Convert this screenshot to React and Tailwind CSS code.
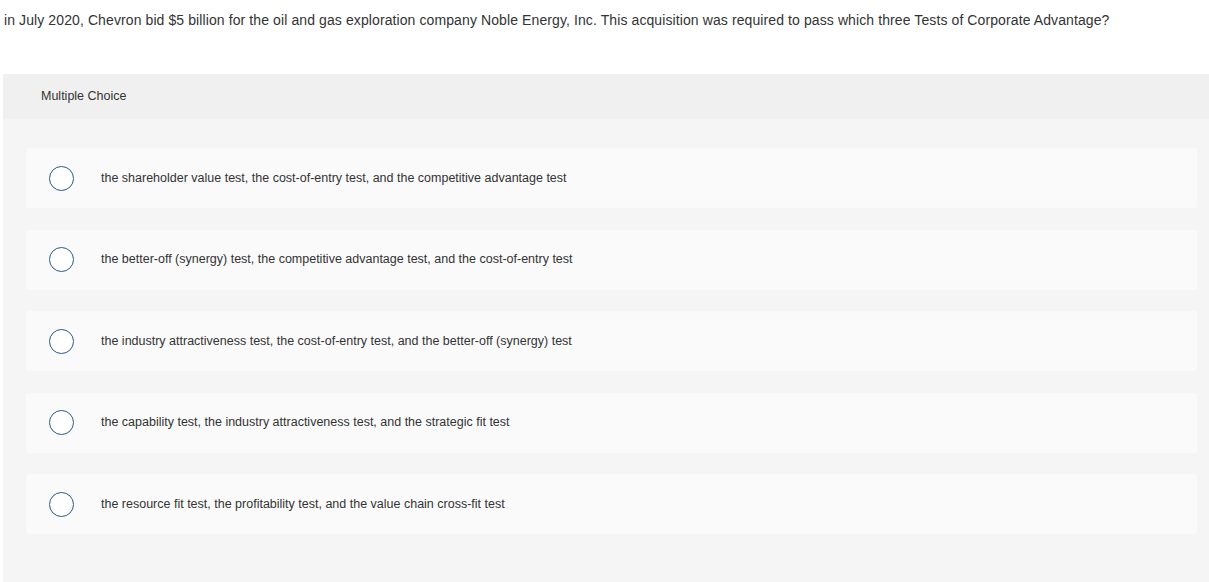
import React from "react";

const options = [
  "the shareholder value test, the cost-of-entry test, and the competitive advantage test",
  "the better-off (synergy) test, the competitive advantage test, and the cost-of-entry test",
  "the industry attractiveness test, the cost-of-entry test, and the better-off (synergy) test",
  "the capability test, the industry attractiveness test, and the strategic fit test",
  "the resource fit test, the profitability test, and the value chain cross-fit test",
];

const App = () => {
  return (
    <div className="min-h-screen bg-white text-[#333] font-['Liberation_Sans',Arial,sans-serif]">
      {/* Question */}
      <div className="h-[74px] pl-[4px] pt-[11px]">
        <p className="text-[14px] leading-[18px] tracking-[0.1px]">
          in July 2020, Chevron bid $5 billion for the oil and gas exploration company Noble Energy, Inc. This acquisition was required to pass which three Tests of Corporate Advantage?
        </p>
      </div>

      {/* Answer panel */}
      <div className="ml-[3px] bg-[#f5f5f5] pb-[60px]">
        <div className="h-[45px] bg-[#f0f0f0] flex items-center pl-[38px] text-[12.5px]">
          Multiple Choice
        </div>

        <div className="flex flex-col gap-[21.5px] pt-[29px] pl-[23px] pr-[12px]">
          {options.map((opt) => (
            <div
              key={opt}
              className="h-[60px] bg-[#fafafa] rounded-[3px] flex items-center"
            >
              <span className="ml-[23px] w-[25px] h-[25px] rounded-full border-[1.5px] border-[#2b5a8e] bg-white shrink-0" />
              <span className="ml-[27px] text-[12.5px] text-[#333]">{opt}</span>
            </div>
          ))}
        </div>
      </div>
    </div>
  );
};

export default App;
